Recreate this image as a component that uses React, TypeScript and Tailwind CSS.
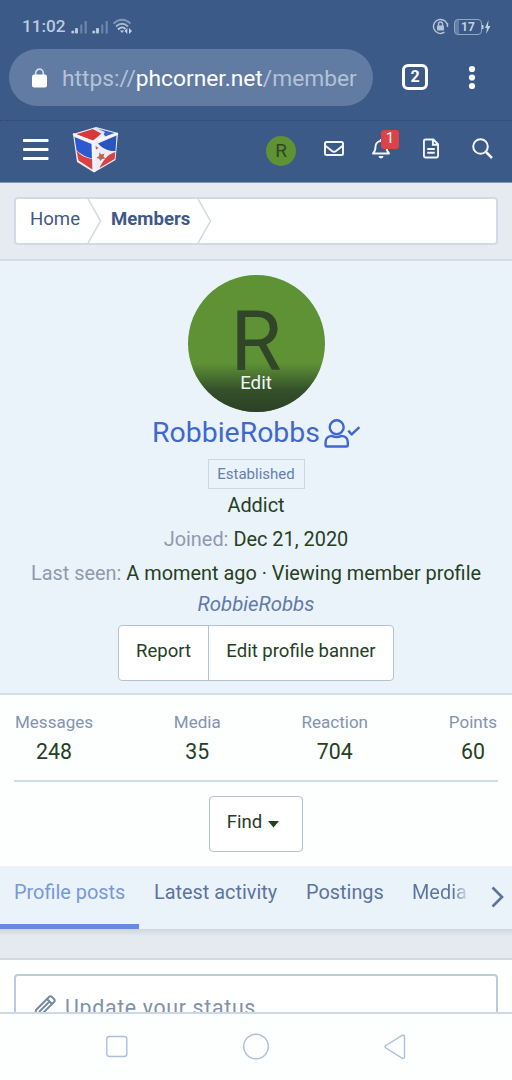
import React from "react";

function SignalBars() {
  return (
    <svg width="17" height="14" viewBox="0 0 17 14" fill="#b9c9dc">
      <circle cx="1.8" cy="12" r="1.6" />
      <rect x="4" y="8" width="3" height="5.5" rx="1" />
      <rect x="9.3" y="4.5" width="2" height="9" fill="#6c88ae" />
      <rect x="13.6" y="1" width="2.2" height="12.5" fill="#6c88ae" />
    </svg>
  );
}

function StatusBar() {
  return (
    <div className="flex h-[49px] shrink-0 items-center pl-[22px] pr-[21px] pt-[4px] text-[#bccbdd]">
      <span className="w-[49px] text-[17.2px] font-medium leading-none">11:02</span>
      <span className="flex w-[21px]"><SignalBars /></span>
      <span className="flex w-[21px]"><SignalBars /></span>
      <svg width="21" height="17" viewBox="0 0 21 17" fill="none" stroke="#7f99bb" strokeWidth="1.8">
        <path d="M.5 5.500Q9-2 17.500 5.500" />
        <path d="M3 8.500Q9 3 15 8.500" stroke="#a5b8cf" />
        <path d="M5 11.500Q9 7.500 12.500 11" stroke="#c4d1e1" />
        <path d="M7 12.500h4l-2 2.500zM11.500 13l2.800-3v6zM19 13l-3-3v6z" fill="#c4d1e1" stroke="none" />
      </svg>
      <span className="grow" />
      <svg className="mr-[5px]" width="17" height="17" viewBox="0 0 17 17" fill="none" stroke="#b3c4d8" strokeWidth="1.4">
        <path d="M12.500 14.200A7 7 0 1 1 15.500 9M15.500 9v-4" />
        <rect x="5" y="7.500" width="7" height="5" rx="1" fill="#b3c4d8" stroke="none" />
        <path d="M6.500 8V6a2 2 0 0 1 4 0v2" />
      </svg>
      <span className="flex h-[16px] w-[28px] items-center justify-center rounded-[4px] border border-[#91a7c2] bg-linear-to-r from-[#637fa7] from-15% to-transparent to-15% text-[12px] font-bold leading-none text-[#c4d1e1]">
        17
      </span>
      <svg width="9" height="14" viewBox="0 0 9 14" fill="#c4d1e1">
        <path d="M0 5h1.500v4H0zM6.500 0L3 8h2L4 14l4.500-8H6z" />
      </svg>
    </div>
  );
}

function AddressBar() {
  return (
    <div className="flex h-[71px] shrink-0 items-start pl-[9px]">
      <div className="flex h-[57px] w-[364px] items-center rounded-full bg-[#617ba3] pl-[23px]">
        <svg className="mr-[16px]" width="15" height="20" viewBox="0 0 15 20">
          <path d="M3.700 8V5a3.800 3.800 0 0 1 7.600 0v3" fill="none" stroke="#cfdceb" strokeWidth="1.700" />
          <rect y="6.500" width="15" height="13" rx="2.200" fill="#fff" />
        </svg>
        <span className="-ml-px mt-[2px] whitespace-nowrap text-[22.770px] leading-[30px] text-[#b3c3d6]">
          https://<span className="text-white">phcorner.net</span>/member
        </span>
      </div>
      <div className="ml-[29px] mt-[15px] flex h-[26px] w-[26px] items-center justify-center rounded-[6px] border-[3px] border-white text-[16px] font-bold leading-none text-white">
        2
      </div>
      <svg className="ml-[40px] mt-[16px]" width="8" height="26" viewBox="0 0 8 26" fill="#fff">
        <circle cx="4" cy="4" r="3.100" />
        <circle cx="4" cy="12.500" r="3.100" />
        <circle cx="4" cy="21" r="3.100" />
      </svg>
    </div>
  );
}

function CubeLogo() {
  return (
    <svg width="47" height="48" viewBox="0 0 47 48">
      <path d="M1 8L24 1l22 6-2.500 27L22 46.500 5 36z" fill="#eceef4" />
      <path d="M3.500 8.500L21 3l9 4-4 3.500-5 4z" fill="#d9383d" />
      <path d="M25 2.500L42.500 7 33 10.500 31 6z" fill="#3561c8" />
      <path d="M21 3l4-.8L33 6l-2 3-3-2z" fill="#dfe4f0" />
      <path d="M2.500 11L19.500 18l.4 14.500C13 31 7 27 4.500 24z" fill="#2d58cf" />
      <path d="M4.500 24.500c3 4 9 7.500 15.500 8.500l.3 10.500L6.500 34.500z" fill="#dc4042" />
      <path d="M26 17.500L44.500 9.500 43.500 25C36 25.500 30 22 26 17.500z" fill="#2855c0" />
      <path d="M43.300 26l-.6 7L27.500 42C31 34 36 28 43.300 26z" fill="#d94245" />
      <path d="M1 8l20.500 8L46 7.500M21.500 16l.8 30" fill="none" stroke="#f4f6fa" strokeWidth="2.200" />
      <path d="M27.500 26.500l2 2 3-1-1 3 2 2-3.500.5-1.500 2-1.500-2.500-2.500-.5 2.500-2z" fill="#b76752" />
      <path d="M23.500 20l3 2-2.500 1.500z" fill="#c85058" />
    </svg>
  );
}

function SiteNav() {
  return (
    <div className="flex h-[62px] shrink-0 items-start border-t border-dotted border-[#2d4770] pl-[23px]">
      <svg className="mt-[18px]" width="26" height="22" viewBox="0 0 26 22" fill="#fff">
        <rect y="0" width="25.500" height="3" rx=".7" />
        <rect y="9" width="25.500" height="3" rx=".7" />
        <rect y="18" width="25.500" height="3" rx=".7" />
      </svg>
      <div className="ml-[23px] mt-[5px]"><CubeLogo /></div>
      <div className="ml-[147px] mt-[15px] flex h-[30px] w-[30px] items-center justify-center rounded-full bg-[#5e9233] pb-[2px] text-[19px] leading-none text-[#314529]">R</div>
      <svg className="ml-[28px] mt-[20px]" width="20" height="15" viewBox="0 0 20 15" fill="none" stroke="#f1f6fb" strokeWidth="2">
        <rect x="1" y="1" width="18" height="13" rx="1.500" />
        <path d="M1 4.500l7 5.500q2 1.500 4 0l7-5.500" />
      </svg>
      <div className="relative ml-[28px] mt-[17px] h-[21px] w-[18px]">
        <svg width="18" height="21" viewBox="0 0 18 21" fill="none" stroke="#f1f6fb" strokeWidth="1.900" strokeLinejoin="round">
          <path d="M1 15.500h16c-2-2-2.500-3-2.500-7A5.500 5.500 0 0 0 3.500 8.500c0 4-.5 5-2.500 7zM9 1v2" />
          <path d="M6.500 18h5a2.500 2.500 0 0 1-5 0z" fill="#f1f6fb" stroke="none" />
        </svg>
        <span className="absolute left-[9px] top-[-8px] flex h-[19px] w-[18px] items-center justify-center rounded-[3px] bg-[#dc4247] pb-[2px] text-[15px] leading-none text-white">1</span>
      </div>
      <svg className="ml-[33px] mt-[17px]" width="16" height="21" viewBox="0 0 17 21" fill="none" stroke="#f1f6fb" strokeWidth="2">
        <path d="M2.500 1H11l5 5v12.500q0 1.500-1.500 1.500h-12Q1 20 1 18.500v-16Q1 1 2.500 1zM10.500 1v5.500H16M4.500 11h8M4.500 15h8" />
      </svg>
      <svg className="ml-[33px] mt-[17px]" width="21" height="21" viewBox="0 0 21 21" fill="none" stroke="#f1f6fb" strokeWidth="2">
        <circle cx="8.500" cy="8.500" r="7.300" />
        <path d="M14 14l6 6" strokeWidth="2.500" />
      </svg>
    </div>
  );
}

function Breadcrumb() {
  return (
    <div className="h-[79px] shrink-0 border-b-2 border-[#d3dce7] border-t border-t-[#8297b4] bg-[#e5ebf0] px-[14px] pt-[14px]">
      <div className="flex h-[48px] items-start rounded-[4px] border-2 border-[#d2dbe5] bg-white text-[18.600px] leading-[24px] text-[#405987]">
        <span className="ml-[14px] mt-[8px] w-[57px]">Home</span>
        <svg width="15" height="44" viewBox="0 0 15 44" fill="none" stroke="#d0d9e2" strokeWidth="1.500"><path d="M1 0l12.500 22L1 44" /></svg>
        <span className="ml-[9px] mt-[8px] w-[86px] font-bold">Members</span>
        <svg width="15" height="44" viewBox="0 0 15 44" fill="none" stroke="#d0d9e2" strokeWidth="1.500"><path d="M1 0l12.500 22L1 44" /></svg>
      </div>
    </div>
  );
}

function ProfileHeader() {
  return (
    <div className="flex h-[434px] shrink-0 flex-col items-center border-b-2 border-[#d2deeb] bg-[#ebf3fa] pt-[14px] text-[19.900px] text-[#25401f]">
      <div className="relative flex h-[137px] w-[137px] shrink-0 justify-center overflow-hidden rounded-full bg-[#5f9235]">
        <span className="mt-[22px] text-[83px] leading-[90px] text-[#314529]">R</span>
        <div className="absolute inset-x-0 bottom-0 flex h-[49px] justify-center bg-linear-to-b from-transparent via-[#34502a] via-55% to-[#2d4027] pt-[7px] text-[18.700px] leading-[26px] text-[#eff7fb]">Edit</div>
      </div>
      <div className="mt-px flex h-[40px] items-center gap-[4px] text-[#3f68d0]">
        <span className="text-[28.400px] leading-[40px]">RobbieRobbs</span>
        <svg width="36" height="29" viewBox="0 0 37 30" fill="none" stroke="#3f68d0" strokeWidth="2.500" strokeLinejoin="round">
          <circle cx="13" cy="8.500" r="7.200" />
          <path d="M8 17.500C4 18 1.500 20 1.500 24v3q0 1.500 1.500 1.500h20q1.500 0 1.500-1.500v-3c0-4-2.500-6-6.500-6.500-3 1.500-7 1.500-10 0z" />
          <path d="M25 12l3.500 4 8-7.500" />
        </svg>
      </div>
      <div className="mt-[6px] flex h-[30px] w-[97px] items-center justify-center border border-[#ccd6e4] text-[15px] leading-none text-[#6580ab]">Established</div>
      <div className="mt-[4px] leading-[26px]">Addict</div>
      <div className="mt-[8px] leading-[26px]"><span className="text-[#8d9aaf]">Joined:</span> Dec 21, 2020</div>
      <div className="mt-[8px] whitespace-nowrap leading-[26px]"><span className="text-[#8d9aaf]">Last seen:</span> A moment ago · Viewing member profile</div>
      <div className="mt-[4px] text-[20.400px] italic leading-[26px] text-[#617aa8]">RobbieRobbs</div>
      <div className="mt-[8px] flex h-[56px] w-[276px] shrink-0 rounded-[4px] border-[1.500px] border-[#b5c1d6] bg-white pb-[2px] text-[18.550px]">
        <button className="-mb-[2px] flex w-[90px] items-center justify-center border-r border-[#b5c1d6] pb-[2px]">Report</button>
        <button className="grow">Edit profile banner</button>
      </div>
    </div>
  );
}

const stats = [
  { label: "Messages", value: "248" },
  { label: "Media", value: "35" },
  { label: "Reaction", value: "704" },
  { label: "Points", value: "60" },
];

function Stats() {
  return (
    <div className="flex h-[171px] shrink-0 flex-col items-center bg-[#fdfefe] px-[14px] pt-[15px]">
      <div className="flex h-[72px] w-full justify-between border-b-2 border-[#d1dce5] px-px">
        {stats.map((s) => (
          <div key={s.label} className="text-center">
            <div className="text-[17px] leading-[24px] text-[#8493b0]">{s.label}</div>
            <div className="mt-[4px] text-[21.300px] leading-[28px] text-[#25401f]">{s.value}</div>
          </div>
        ))}
      </div>
      <button className="mt-[14px] flex h-[56px] w-[94px] items-center justify-center gap-[6px] rounded-[4px] border-[1.500px] border-[#b5c1d6] bg-white pb-[2px] pr-[6px] text-[18.600px] text-[#25401f]">
        Find
        <svg className="mt-[3px]" width="11" height="7" viewBox="0 0 11 7" fill="#25401f"><path d="M0 0h11L5.500 6.500z" /></svg>
      </button>
    </div>
  );
}

function Tabs() {
  return (
    <div className="flex h-[63px] shrink-0 overflow-hidden whitespace-nowrap bg-[#ebf3fa] text-[19.900px] leading-[26px] text-[#5d749d]">
      <div className="w-[139px] shrink-0 border-b-[5px] border-[#668bdc] pl-[14px] pt-[14px] text-[#7798d9]">Profile posts</div>
      <div className="w-[152px] shrink-0 pl-[15px] pt-[14px]">Latest activity</div>
      <div className="w-[106px] shrink-0 pl-[15px] pt-[14px]">Postings</div>
      <div className="w-[75px] shrink-0 bg-linear-to-r from-[#5d749d] from-75% to-[#dce6f1] to-95% bg-clip-text pl-[15px] pt-[14px] text-transparent">Media</div>
      <svg className="ml-[18px] mt-[20px] shrink-0" width="14" height="22" viewBox="0 0 14 22" fill="none" stroke="#5d749d" strokeWidth="2.700"><path d="M2.500 1.500L12 11l-9.500 9.500" /></svg>
    </div>
  );
}

function StatusComposer() {
  return (
    <div className="flex h-[83px] shrink-0 flex-col">
      <div className="h-[31px] shrink-0 border-b-2 border-[#d2d9df] bg-linear-to-b from-[#cdd6e0] to-[#e5eaee] to-25%" />
      <div className="h-[52px] overflow-hidden bg-[#fdfefe] px-[14px] pt-[14px]">
        <div className="flex h-[60px] rounded-[4px] border-2 border-[#bdcada] bg-white pl-[18px] pt-[18px] text-[21.300px] leading-[28px] tracking-[0.700px] text-[#8191a9]">
          <svg className="mr-[9px] mt-px shrink-0" width="22" height="22" viewBox="0 0 22 22" fill="none" stroke="#768aa4" strokeWidth="2" strokeLinejoin="round">
            <path d="M1 21l1-6L15 2q1.500-1.500 3 0l2 2q1.500 1.500 0 3L7 20zM13 4l5 5M5 17L16 6" />
          </svg>
          Update your status...
        </div>
      </div>
    </div>
  );
}

function SystemNav() {
  return (
    <div className="flex h-[69px] shrink-0 items-center border-t-2 border-[#ced8e5] bg-[#fdfefe] pb-px pl-[106px]">
      <svg width="300" height="28" viewBox="0 0 300 28" fill="none" stroke="#b0bfd4" strokeWidth="1.400">
        <rect x=".8" y="3.500" width="20" height="20" rx="2.500" />
        <circle cx="150" cy="13.500" r="12.300" />
        <path d="M280 12.500l16-10q2.500-1 2.500 1.500v20q0 2-2.500 1l-16-10q-2-1.500 0-2.500z" />
      </svg>
    </div>
  );
}

export default function App() {
  return (
    <main className="flex h-[1080px] w-[512px] flex-col overflow-hidden bg-[#3b5a87] font-['Roboto',sans-serif]">
      <StatusBar />
      <AddressBar />
      <SiteNav />
      <Breadcrumb />
      <ProfileHeader />
      <Stats />
      <Tabs />
      <StatusComposer />
      <SystemNav />
    </main>
  );
}
